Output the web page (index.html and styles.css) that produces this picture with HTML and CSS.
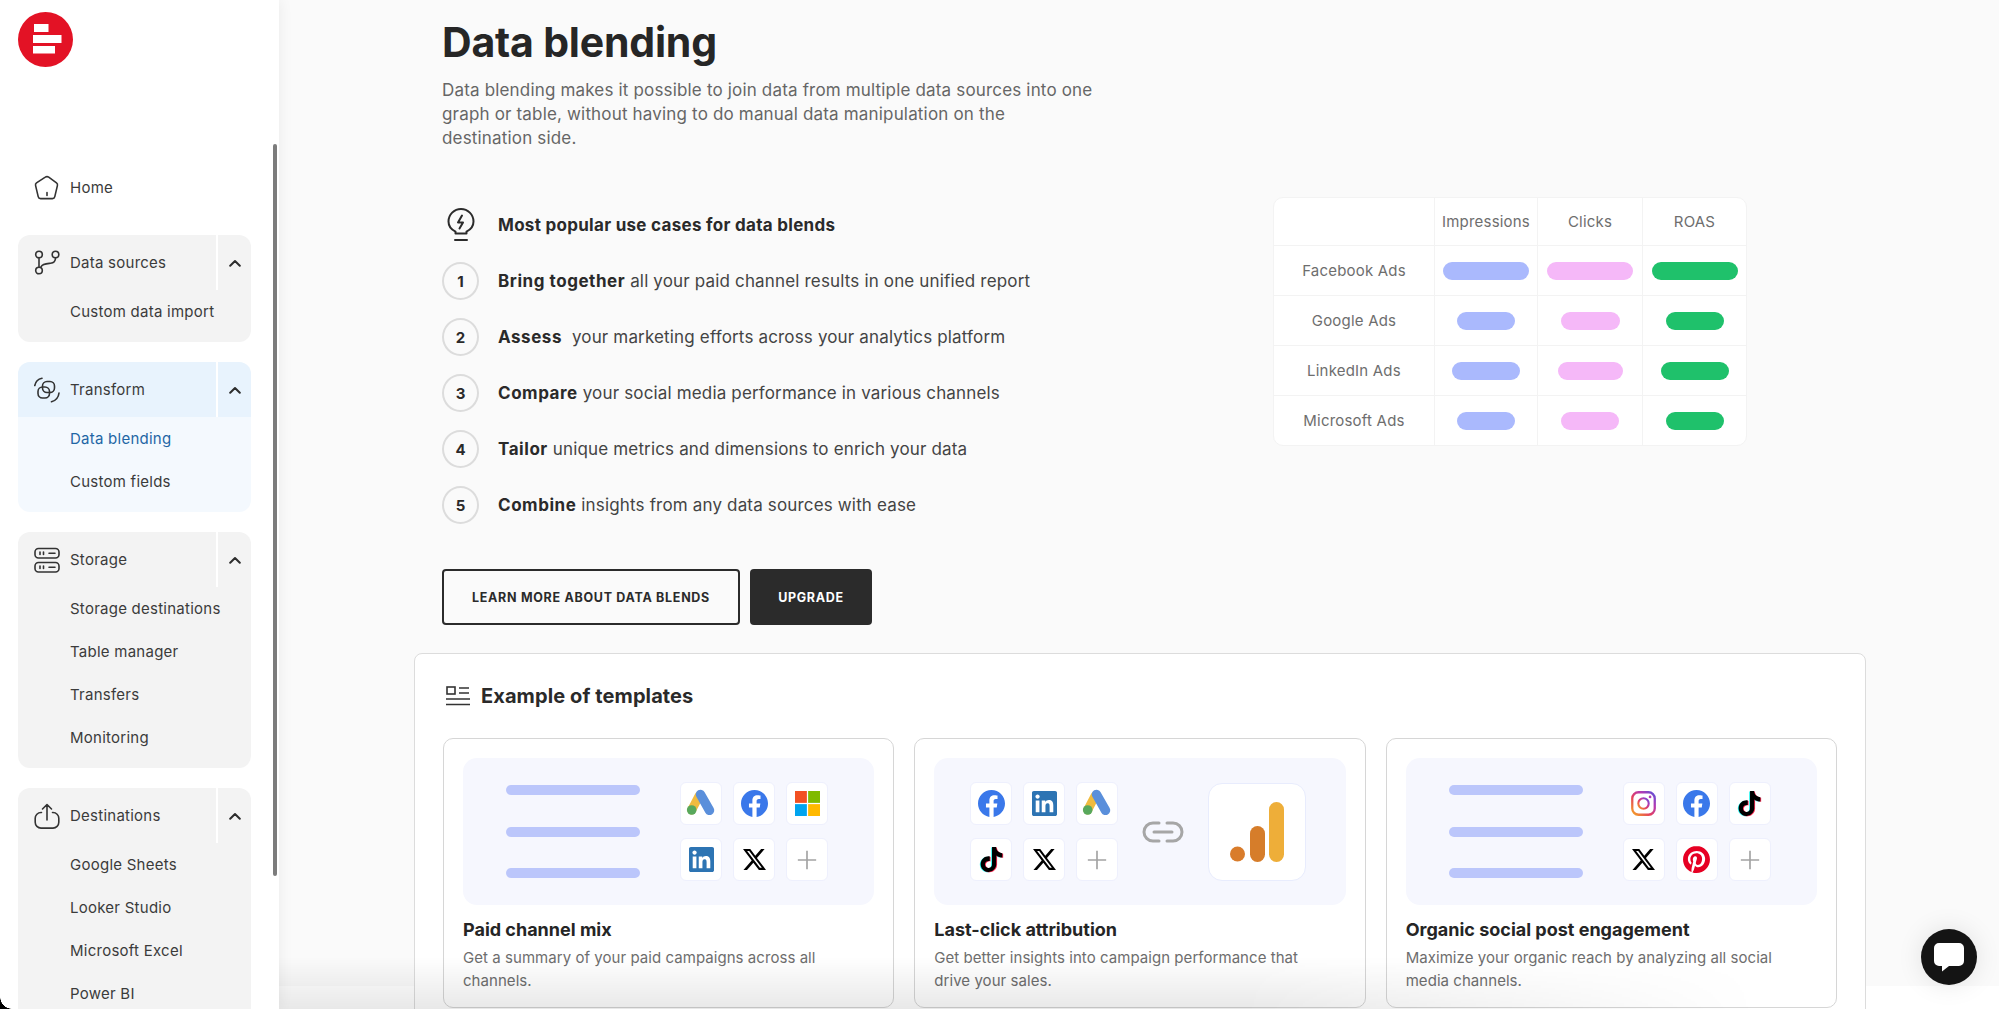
FILE: index.html
```html
<!DOCTYPE html>
<html lang="en">
<head>
<meta charset="utf-8">
<title>Data blending</title>
<link rel="stylesheet" href="styles.css">
</head>
<body>
<svg class="defs" width="0" height="0" aria-hidden="true">
  <defs>
    <linearGradient id="ig" x1="0" y1="1" x2="1" y2="0">
      <stop offset="0" stop-color="#f5a623"/><stop offset=".4" stop-color="#e4405f"/><stop offset=".7" stop-color="#b13ab5"/><stop offset="1" stop-color="#5b51d8"/>
    </linearGradient>
    <symbol id="i-gads" viewBox="0 0 40 41">
      <path d="M18 13 10.700 27" stroke="#f0bb3f" stroke-width="9" stroke-linecap="round" fill="none"/>
      <path d="M19.500 11.500 28.500 27.300" stroke="#5a8fdb" stroke-width="9.500" stroke-linecap="round" fill="none"/>
      <circle cx="10.700" cy="27" r="4.800" fill="#58a85c"/>
    </symbol>
    <symbol id="i-fb" viewBox="0 0 24 24">
      <path fill="#3a78ea" d="M24 12.073c0-6.627-5.373-12-12-12s-12 5.373-12 12c0 5.99 4.388 10.954 10.125 11.854v-8.385H7.078v-3.47h3.047V9.43c0-3.007 1.792-4.669 4.533-4.669 1.312 0 2.686.235 2.686.235v2.953H15.83c-1.491 0-1.956.925-1.956 1.874v2.25h3.328l-.532 3.47h-2.796v8.385C19.612 23.027 24 18.062 24 12.073z"/>
    </symbol>
    <symbol id="i-ms" viewBox="0 0 24 24">
      <path fill="#f25022" d="M0 0h11.400v11.400H0z"/><path fill="#7fba00" d="M12.600 0H24v11.400H12.600z"/><path fill="#00a4ef" d="M0 12.600h11.400V24H0z"/><path fill="#ffb900" d="M12.600 12.600H24V24H12.600z"/>
    </symbol>
    <symbol id="i-in" viewBox="0 0 24 24">
      <path fill="#2d74b3" d="M20.447 20.452h-3.554v-5.569c0-1.328-.027-3.037-1.852-3.037-1.853 0-2.136 1.445-2.136 2.939v5.667H9.351V9h3.414v1.561h.046c.477-.9 1.637-1.85 3.37-1.85 3.601 0 4.267 2.37 4.267 5.455v6.286zM5.337 7.433c-1.144 0-2.063-.926-2.063-2.065 0-1.138.92-2.063 2.063-2.063 1.14 0 2.064.925 2.064 2.063 0 1.139-.925 2.065-2.064 2.065zm1.782 13.019H3.555V9h3.564v11.452zM22.225 0H1.771C.792 0 0 .774 0 1.729v20.542C0 23.227.792 24 1.771 24h20.451C23.2 24 24 23.227 24 22.271V1.729C24 .774 23.2 0 22.222 0h.003z"/>
    </symbol>
    <symbol id="i-x" viewBox="0 0 24 24">
      <path fill="#000" d="M18.901 1.153h3.68l-8.04 9.19L24 22.846h-7.406l-5.8-7.584-6.638 7.584H.474l8.6-9.83L0 1.154h7.594l5.243 6.932ZM17.61 20.644h2.039L6.486 3.24H4.298Z"/>
    </symbol>
    <symbol id="i-plus" viewBox="0 0 24 24">
      <path d="M12 1v22M1 12h22" stroke="#a3a3a3" stroke-width="2" fill="none"/>
    </symbol>
    <path id="tt" d="M12.525.02c1.31-.02 2.61-.01 3.91-.02.08 1.53.63 3.09 1.75 4.17 1.12 1.11 2.7 1.62 4.24 1.79v4.03c-1.44-.05-2.89-.35-4.2-.97-.57-.26-1.1-.59-1.62-.93-.01 2.92.01 5.84-.02 8.75-.08 1.4-.54 2.79-1.35 3.94-1.31 1.92-3.58 3.17-5.91 3.21-1.43.08-2.86-.31-4.08-1.03-2.02-1.19-3.44-3.37-3.65-5.71-.02-.5-.03-1-.01-1.49.18-1.9 1.12-3.72 2.58-4.96 1.66-1.44 3.98-2.13 6.15-1.72.02 1.48-.04 2.96-.04 4.44-.99-.32-2.15-.23-3.02.37-.63.41-1.11 1.04-1.36 1.75-.21.51-.15 1.07-.14 1.61.24 1.64 1.82 3.02 3.5 2.87 1.12-.01 2.19-.66 2.77-1.61.19-.33.4-.67.41-1.06.1-1.79.06-3.57.07-5.36.01-4.03-.01-8.05.02-12.07z"/>
    <symbol id="i-tt" viewBox="-1 -1 26 26">
      <use href="#tt" fill="#25f4ee" x="-.8" y=".4"/>
      <use href="#tt" fill="#fe2c55" x=".8" y=".4"/>
      <use href="#tt" fill="#000"/>
    </symbol>
    <symbol id="i-ig" viewBox="0 0 24 24">
      <rect x="1.200" y="1.200" width="21.600" height="21.600" rx="6" fill="none" stroke="url(#ig)" stroke-width="2.200"/>
      <circle cx="12" cy="12" r="5" fill="none" stroke="url(#ig)" stroke-width="2"/>
      <circle cx="18.300" cy="5.700" r="1.300" fill="#b13ab5"/>
    </symbol>
    <symbol id="i-pin" viewBox="0 0 24 24">
      <path fill="#e60023" d="M12.017 0C5.396 0 .029 5.367.029 11.987c0 5.079 3.158 9.417 7.618 11.162-.105-.949-.199-2.403.041-3.439.219-.937 1.406-5.957 1.406-5.957s-.359-.72-.359-1.781c0-1.663.967-2.911 2.168-2.911 1.024 0 1.518.769 1.518 1.688 0 1.029-.653 2.567-.992 3.992-.285 1.193.6 2.165 1.775 2.165 2.128 0 3.768-2.245 3.768-5.487 0-2.861-2.063-4.869-5.008-4.869-3.41 0-5.409 2.562-5.409 5.199 0 1.033.394 2.143.889 2.741.099.12.112.225.085.345-.09.375-.293 1.199-.334 1.363-.053.225-.172.271-.401.165-1.495-.69-2.433-2.878-2.433-4.646 0-3.776 2.748-7.252 7.92-7.252 4.158 0 7.392 2.967 7.392 6.923 0 4.135-2.607 7.462-6.233 7.462-1.214 0-2.354-.629-2.758-1.379l-.749 2.848c-.269 1.045-1.004 2.352-1.498 3.146 1.123.345 2.306.535 3.55.535 6.607 0 11.985-5.365 11.985-11.987C23.97 5.39 18.592.026 11.985.026L12.017 0z"/>
    </symbol>
  </defs>
</svg>

<div class="app">
  <aside class="sidebar">
    <div class="logo-wrap">
      <svg class="logo" viewBox="0 0 55 55" width="55" height="55">
        <circle cx="27.500" cy="27.500" r="27.500" fill="#e31225"/>
        <path fill="#fff" d="M16 12h14.500v8H16zM15 23h28.500v8H15zM15 34h22v7.500H15z"/>
      </svg>
    </div>
    <nav class="nav">
      <div class="nav-row nav-home">
        <svg class="nav-icon" viewBox="0 0 26 26"><path d="M11.300 2.200a3 3 0 0 1 3.400 0l7.800 5.700a2.500 2.500 0 0 1 .9 2.700l-2.600 11a2.500 2.500 0 0 1-2.400 2H6.600a2.500 2.500 0 0 1-2.400-2l-2.600-11a2.500 2.500 0 0 1 .9-2.700zM13 17.500v3"/></svg>
        <span>Home</span>
      </div>

      <section class="group">
        <div class="group-head">
          <div class="nav-row">
            <svg class="nav-icon" viewBox="0 0 26 26"><circle cx="5" cy="4.500" r="3.300"/><circle cx="21.500" cy="4.500" r="3.300"/><circle cx="5" cy="20.500" r="3.300"/><path d="M5 8v9M21.500 8c0 3.500-2 5-5 5.300-4.500.4-8 .4-9.500 3.500"/></svg>
            <span>Data sources</span>
          </div>
          <div class="chev-cell"><svg class="chev" viewBox="0 0 12 8"><path d="M1.200 6.800 6 2l4.800 4.800"/></svg></div>
        </div>
        <a class="sub">Custom data import</a>
      </section>

      <section class="group group-active">
        <div class="group-head">
          <div class="nav-row">
            <svg class="nav-icon" viewBox="0 0 26 26"><rect x="4" y="10" width="11.500" height="11" rx="4.500"/><rect x="8.500" y="4.500" width="12" height="11" rx="4.500"/><path d="M.8 8.500C1.500 4.500 4 2 8 1.200M25 16c-.5 4.500-3 7.500-7.500 8.800"/></svg>
            <span>Transform</span>
          </div>
          <div class="chev-cell"><svg class="chev" viewBox="0 0 12 8"><path d="M1.200 6.800 6 2l4.800 4.800"/></svg></div>
        </div>
        <a class="sub sub-active">Data blending</a>
        <a class="sub">Custom fields</a>
      </section>

      <section class="group">
        <div class="group-head">
          <div class="nav-row">
            <svg class="nav-icon" viewBox="0 0 26 26"><rect x="1" y="1.500" width="24" height="9.500" rx="3.500"/><rect x="1" y="15.500" width="24" height="9.500" rx="3.500"/><path d="M6 5v2.500M9.500 5v2.500M15 6.200h6M6 19v2.500M9.500 19v2.500M15 20.200h6"/></svg>
            <span>Storage</span>
          </div>
          <div class="chev-cell"><svg class="chev" viewBox="0 0 12 8"><path d="M1.200 6.800 6 2l4.800 4.800"/></svg></div>
        </div>
        <a class="sub">Storage destinations</a>
        <a class="sub">Table manager</a>
        <a class="sub">Transfers</a>
        <a class="sub">Monitoring</a>
      </section>

      <section class="group">
        <div class="group-head">
          <div class="nav-row">
            <svg class="nav-icon" viewBox="0 0 26 26"><path d="M7.500 9.500H7a5.800 5.800 0 0 0-5.800 5.800v4a5.800 5.800 0 0 0 5.800 5.800h12a5.800 5.800 0 0 0 5.800-5.800v-4A5.800 5.800 0 0 0 19 9.500h-.5M13 17V1.500M8.500 6 13 1.500 17.500 6"/></svg>
            <span>Destinations</span>
          </div>
          <div class="chev-cell"><svg class="chev" viewBox="0 0 12 8"><path d="M1.200 6.800 6 2l4.800 4.800"/></svg></div>
        </div>
        <a class="sub">Google Sheets</a>
        <a class="sub">Looker Studio</a>
        <a class="sub">Microsoft Excel</a>
        <a class="sub">Power BI</a>
      </section>
    </nav>
    <div class="scroll-thumb"></div>
  </aside>

  <main class="main">
    <div class="hero">
      <h1 class="title">Data blending</h1>
      <p class="lead">Data blending makes it possible to join data from multiple data sources into one graph or table, without having to do manual data manipulation on the destination side.</p>
      <div class="split">
        <div class="uses">
          <div class="use">
            <svg class="bulb" viewBox="0 0 28 34"><path d="M8.500 25.500v-1.800C4.200 21.500 1.500 17.500 1.500 13.500a12.500 12.500 0 0 1 25 0c0 4-2.700 8-7 10.200v1.800zM8 32h12"/><path class="bolt" d="M15 7.500 11 14.500h5l-3.500 6"/></svg>
            <p class="use-head">Most popular use cases for data blends</p>
          </div>
          <div class="use"><span class="num">1</span><p><b>Bring together</b> all your paid channel results in one unified report</p></div>
          <div class="use"><span class="num">2</span><p><b>Assess</b>&nbsp; your marketing efforts across your analytics platform</p></div>
          <div class="use"><span class="num">3</span><p><b>Compare</b> your social media performance in various channels</p></div>
          <div class="use"><span class="num">4</span><p><b>Tailor</b> unique metrics and dimensions to enrich your data</p></div>
          <div class="use"><span class="num">5</span><p><b>Combine</b> insights from any data sources with ease</p></div>
        </div>

        <div class="matrix">
          <div class="cell"></div><div class="cell">Impressions</div><div class="cell">Clicks</div><div class="cell">ROAS</div>
          <div class="cell">Facebook Ads</div>
          <div class="cell"><i class="bar bar-blue" style="width:86px"></i></div><div class="cell"><i class="bar bar-pink" style="width:86px"></i></div><div class="cell"><i class="bar bar-green" style="width:86px"></i></div>
          <div class="cell">Google Ads</div>
          <div class="cell"><i class="bar bar-blue" style="width:58px"></i></div><div class="cell"><i class="bar bar-pink" style="width:59px"></i></div><div class="cell"><i class="bar bar-green" style="width:58px"></i></div>
          <div class="cell">LinkedIn Ads</div>
          <div class="cell"><i class="bar bar-blue" style="width:68px"></i></div><div class="cell"><i class="bar bar-pink" style="width:65px"></i></div><div class="cell"><i class="bar bar-green" style="width:68px"></i></div>
          <div class="cell">Microsoft Ads</div>
          <div class="cell"><i class="bar bar-blue" style="width:58px"></i></div><div class="cell"><i class="bar bar-pink" style="width:58px"></i></div><div class="cell"><i class="bar bar-green" style="width:58px"></i></div>
        </div>
      </div>

      <div class="actions">
        <a class="btn btn-outline">LEARN MORE ABOUT DATA BLENDS</a>
        <a class="btn btn-solid">UPGRADE</a>
      </div>
    </div>

    <section class="panel">
      <h2 class="panel-title">
        <svg class="panel-icon" viewBox="0 0 24 20"><rect x="1" y="1" width="8" height="7"/><path d="M13 2h10M13 7h10M0 13h24M0 18.500h24"/></svg>
        Example of templates
      </h2>
      <div class="cards">
        <article class="card">
          <div class="preview">
            <div class="lines"><i></i><i></i><i></i></div>
            <div class="tiles">
              <span class="tile"><svg class="logo-g"><use href="#i-gads"/></svg></span>
              <span class="tile"><svg class="logo-m"><use href="#i-fb"/></svg></span>
              <span class="tile"><svg class="logo-s"><use href="#i-ms"/></svg></span>
              <span class="tile"><svg class="logo-s"><use href="#i-in"/></svg></span>
              <span class="tile"><svg class="logo-x"><use href="#i-x"/></svg></span>
              <span class="tile"><svg class="logo-p"><use href="#i-plus"/></svg></span>
            </div>
          </div>
          <h3>Paid channel mix</h3>
          <p>Get a summary of your paid campaigns across all channels.</p>
        </article>
        <article class="card">
          <div class="preview">
            <div class="tiles">
              <span class="tile"><svg class="logo-m"><use href="#i-fb"/></svg></span>
              <span class="tile"><svg class="logo-s"><use href="#i-in"/></svg></span>
              <span class="tile"><svg class="logo-g"><use href="#i-gads"/></svg></span>
              <span class="tile"><svg class="logo-m"><use href="#i-tt"/></svg></span>
              <span class="tile"><svg class="logo-x"><use href="#i-x"/></svg></span>
              <span class="tile"><svg class="logo-p"><use href="#i-plus"/></svg></span>
            </div>
            <svg class="link" viewBox="0 0 42 22"><path d="M17 2H11a9 9 0 0 0 0 18h6M25 2h6a9 9 0 0 1 0 18h-6M12 11h18"/></svg>
            <span class="tile-big">
              <svg viewBox="0 0 54 60" width="54" height="60"><circle cx="7.500" cy="52" r="7.500" fill="#d97c2b"/><rect x="20" y="24" width="15" height="36" rx="7.500" fill="#d67d2a"/><rect x="39" y="0" width="15" height="60" rx="7.500" fill="#eeae39"/></svg>
            </span>
          </div>
          <h3>Last-click attribution</h3>
          <p>Get better insights into campaign performance that drive your sales.</p>
        </article>
        <article class="card">
          <div class="preview">
            <div class="lines"><i></i><i></i><i></i></div>
            <div class="tiles">
              <span class="tile"><svg class="logo-s"><use href="#i-ig"/></svg></span>
              <span class="tile"><svg class="logo-m"><use href="#i-fb"/></svg></span>
              <span class="tile"><svg class="logo-m"><use href="#i-tt"/></svg></span>
              <span class="tile"><svg class="logo-x"><use href="#i-x"/></svg></span>
              <span class="tile"><svg class="logo-m"><use href="#i-pin"/></svg></span>
              <span class="tile"><svg class="logo-p"><use href="#i-plus"/></svg></span>
            </div>
          </div>
          <h3>Organic social post engagement</h3>
          <p>Maximize your organic reach by analyzing all social media channels.</p>
        </article>
      </div>
    </section>
  </main>
</div>

<div class="bottom-shade"></div>
<div class="window-corner"></div>
<button class="chat" aria-label="Chat">
  <svg viewBox="0 0 30 29" width="30" height="29"><path fill="#fff" d="M5 0h20a5 5 0 0 1 5 5v13a5 5 0 0 1-5 5H15l-7 5.500V23H5a5 5 0 0 1-5-5V5a5 5 0 0 1 5-5z"/></svg>
</button>
</body>
</html>
```
FILE: styles.css
```css
* { box-sizing: border-box; }
html, body { margin: 0; height: 100%; }
body {
  font-family: Inter, "Liberation Sans", sans-serif;
  color: #2a2a2a;
  background: #fff;
  overflow: hidden;
  position: relative;
}
p, h1, h2, h3 { margin: 0; }
.defs { position: absolute; }

.app { display: flex; height: 1009px; overflow: hidden; }

/* Sidebar */
.sidebar {
  position: relative;
  z-index: 2;
  flex: 0 0 279px;
  background: #fff;
  padding: 0 28px 0 18px;
  box-shadow: 0 0 14px rgba(0, 0, 0, .07);
  overflow: hidden;
}
.logo-wrap { height: 160px; padding-top: 12px; }
.logo { display: block; }
.nav { display: flex; flex-direction: column; gap: 20px; }
.nav-row {
  display: flex;
  align-items: center;
  gap: 10px;
  height: 55px;
  padding-left: 16px;
  flex: 1;
  font-size: 15px;
  letter-spacing: .25px;
  color: #3b3b3b;
}
.nav-home { flex: none; }
.nav-icon {
  width: 26px;
  height: 26px;
  flex: none;
  fill: none;
  stroke: #333;
  stroke-width: 1.6;
  stroke-linecap: round;
  stroke-linejoin: round;
}
.group { background: #f3f3f3; border-radius: 12px; padding-bottom: 9px; overflow: hidden; flex: none; }
.group-head { display: flex; height: 55px; }
.chev-cell {
  flex: 0 0 35px;
  display: flex;
  align-items: center;
  justify-content: center;
  border-left: 2px solid #fff;
}
.chev { width: 12px; height: 8px; fill: none; stroke: #2d2d2d; stroke-width: 2; stroke-linecap: round; stroke-linejoin: round; }
.sub {
  display: flex;
  align-items: center;
  height: 43px;
  padding-left: 52px;
  font-size: 15px;
  letter-spacing: .25px;
  color: #3b3b3b;
  white-space: nowrap;
}
.group-active { background: #f4f9fe; }
.group-active .group-head { background: #e8f3fd; }
.sub-active { color: #1f66a5; }
.scroll-thumb {
  position: absolute;
  top: 144px;
  left: 273px;
  width: 4px;
  height: 732px;
  border-radius: 2px;
  background: #7c7c7c;
}

/* Main */
.main {
  flex: 1;
  min-width: 0;
  padding-left: 135px;
  padding-right: 133px;
  background: linear-gradient(#fafafa 986px, #fff 986px);
}
.hero { padding: 18px 119px 0 28px; }
.title { font-size: 41px; line-height: 48px; font-weight: 700; color: #262626; letter-spacing: -.2px; }
.lead { margin-top: 12px; width: 655px; font-size: 17px; letter-spacing: .17px; line-height: 24px; color: #666; }
.split { display: flex; justify-content: space-between; align-items: flex-start; margin-top: 47px; }
.use { display: flex; align-items: center; gap: 19px; height: 56px; font-size: 17px; letter-spacing: .16px; color: #444; }
.use b { font-weight: 700; color: #2a2a2a; letter-spacing: .55px; }
.use-head { font-weight: 700; color: #2a2a2a; letter-spacing: .29px; }
.bulb {
  width: 28px;
  height: 34px;
  margin: 0 4px 0 5px;
  fill: none;
  stroke: #2b2b2b;
  stroke-width: 2;
  stroke-linecap: round;
  stroke-linejoin: round;
}
.num {
  flex: none;
  width: 37px;
  height: 38px;
  display: flex;
  align-items: center;
  justify-content: center;
  border: 2px solid #dcdcdc;
  border-radius: 50%;
  font-size: 15px;
  letter-spacing: 0;
  font-weight: 700;
  color: #2a2a2a;
}

.matrix {
  display: grid;
  grid-template-columns: 161px 103px 105px 103px;
  grid-template-rows: 48px 50px 50px 50px 49px;
  background: #fff;
  border: 1px solid #f3f3f3;
  border-radius: 10px;
  overflow: hidden;
  font-size: 15px;
  letter-spacing: .2px;
  color: #6e6e6e;
}
.cell {
  display: flex;
  align-items: center;
  justify-content: center;
  border-right: 1px solid #f3f3f3;
  border-bottom: 1px solid #f3f3f3;
}
.cell:nth-child(4n) { border-right: 0; }
.cell:nth-last-child(-n+4) { border-bottom: 0; }
.bar { display: block; height: 18px; border-radius: 9px; }
.bar-blue { background: #aab9fd; }
.bar-pink { background: #f5b8f8; }
.bar-green { background: #1fc16b; }

.actions { display: flex; gap: 10px; margin-top: 36px; }
.btn {
  display: flex;
  align-items: center;
  justify-content: center;
  height: 56px;
  border-radius: 4px;
  font-size: 12.500px;
  font-weight: 700;
  letter-spacing: .7px;
}
.btn-outline { width: 298px; border: 2px solid #2b2b2b; color: #2b2b2b; }
.btn-solid { width: 122px; background: #2b2b2b; color: #fff; }

/* Panel */
.panel {
  margin-top: 28px;
  height: 400px;
  background: #fff;
  border: 1px solid #dcdcdc;
  border-radius: 8px;
  padding: 0 28px;
}
.panel-title {
  display: flex;
  align-items: center;
  gap: 11px;
  height: 84px;
  padding-left: 3px;
  font-size: 20px;
  letter-spacing: .1px;
  line-height: 24px;
  font-weight: 700;
  color: #2a2a2a;
}
.panel-icon { width: 24px; height: 20px; fill: none; stroke: #333; stroke-width: 1.6; }
.cards { display: grid; grid-template-columns: repeat(3, 1fr); gap: 20px; }
.card {
  height: 270px;
  padding: 19px 19px 0;
  border: 1px solid #d6d6d6;
  border-radius: 10px;
  background: #fff;
}
.preview {
  display: flex;
  align-items: center;
  justify-content: center;
  gap: 40px;
  height: 147px;
  padding-right: 3px;
  border-radius: 14px;
  background: #f6f7fe;
}
.preview .link { margin: 0 -16px; }
.lines { display: flex; flex-direction: column; justify-content: space-between; height: 93px; }
.lines i { display: block; width: 134px; height: 10px; border-radius: 5px; background: #bbc6fb; }
.tiles { display: grid; grid-template-columns: repeat(3, 42px); grid-auto-rows: 43px; gap: 13px 11px; }
.tile {
  display: flex;
  align-items: center;
  justify-content: center;
  background: #fff;
  border: 1px solid #eef0fd;
  border-radius: 6px;
}
.logo-m { width: 27px; height: 27px; }
.logo-s { width: 25px; height: 25px; }
.logo-g { width: 40px; height: 41px; }
.logo-x { width: 23px; height: 23px; }
.logo-p { width: 20px; height: 20px; }
.link { width: 42px; height: 22px; fill: none; stroke: #a6a6a6; stroke-width: 3; stroke-linecap: round; }
.tile-big {
  flex: none;
  width: 98px;
  height: 98px;
  display: flex;
  align-items: center;
  justify-content: center;
  background: #fff;
  border: 1px solid #e8ecfd;
  border-radius: 14px;
}
.card h3 { margin-top: 13px; font-size: 18px; line-height: 24px; font-weight: 700; color: #252525; }
.card p { margin-top: 4px; padding-right: 10px; font-size: 15px; letter-spacing: .05px; line-height: 23px; color: #6e6e6e; }

/* Overlays */
.bottom-shade {
  position: absolute;
  left: 279px;
  bottom: 0;
  width: 1480px;
  height: 52px;
  z-index: 3;
  pointer-events: none;
  background: linear-gradient(rgba(0, 0, 0, 0), rgba(0, 0, 0, .09));
  -webkit-mask-image: linear-gradient(to right, #000 65%, transparent);
  mask-image: linear-gradient(to right, #000 65%, transparent);
}
.window-corner {
  position: absolute;
  left: 0;
  bottom: 0;
  width: 12px;
  height: 12px;
  z-index: 4;
  background: radial-gradient(circle at top right, transparent 11.500px, #000 12px);
}
.chat {
  position: absolute;
  left: 1921px;
  top: 929px;
  z-index: 5;
  width: 56px;
  height: 56px;
  padding: 0;
  display: flex;
  align-items: center;
  justify-content: center;
  border: 0;
  border-radius: 50%;
  background: #141414;
  box-shadow: 0 0 26px rgba(0, 0, 0, .1);
}
```
